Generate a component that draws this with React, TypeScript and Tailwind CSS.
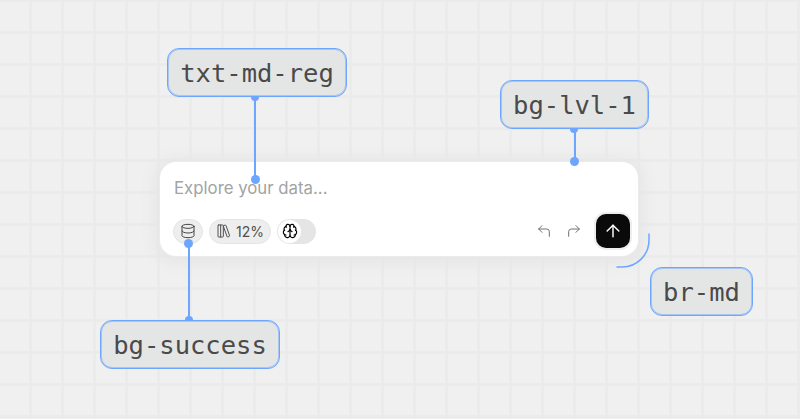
import React from 'react';
import { ArrowUp, Brain, CornerUpLeft, CornerUpRight, Database, LibraryBig } from 'lucide-react';

// Annotation label, sits on the free canvas around the card
const Tag = ({ text, className = '' }: { text: string; className?: string }) => (
  <div
    className={`absolute h-[49px] pt-[1px] flex items-center justify-center rounded-[12px] border border-[#6ea6ff] shadow-[inset_0_0_0_1px_#6ea6ff80] bg-[#e4e6e6] font-['DejaVu_Sans_Mono',monospace] text-[25.5px] text-[#4a4a4a] ${className}`}
  >
    {text}
  </div>
);

const Dot = ({ className = '' }: { className?: string }) => (
  <div className={`absolute w-[9px] h-[9px] rounded-full bg-[#6ea6ff] ${className}`} />
);

const Line = ({ className = '' }: { className?: string }) => (
  <div className={`absolute w-[2px] bg-[#6ea6ff] ${className}`} />
);

export default function App() {
  return (
    <div className="relative w-[800px] h-[419px] overflow-hidden flex items-center justify-center bg-[#f0f0f0] bg-[linear-gradient(to_right,#ebebeb_3px,transparent_3px),linear-gradient(to_bottom,#ebebeb_3px,transparent_3px)] bg-[length:32px_32px] bg-[position:29px_31px] font-['Inter',sans-serif]">
      {/* Prompt card */}
      <div className="w-[478px] h-[94px] mr-[2px] -mt-[1px] flex flex-col justify-between rounded-[16px] bg-white pl-[13px] pr-[8px] pt-[16px] pb-[8px] shadow-[0_0_0_1px_#ebebeb,0_2px_14px_6px_#e6e6e6]">
        <div className="pl-[1px] text-[16.8px] leading-[20px] text-[#a3a3a3]">Explore your data...</div>
        <div className="flex items-center justify-between">
          <div className="flex items-center gap-[6px]">
            <div className="w-[30px] h-[25px] flex items-center justify-center rounded-full bg-[#eeeeee] border border-[#e4e4e4] text-[#444444]">
              <Database size={16} strokeWidth={1.5} />
            </div>
            <div className="h-[25px] w-[62px] flex items-center justify-center gap-[4px] rounded-full bg-[#eeeeee] border border-[#e4e4e4] text-[14px] text-[#505050]">
              <LibraryBig size={16} strokeWidth={1.5} />
              12%
            </div>
            <div className="h-[25px] w-[39px] flex items-center rounded-full bg-[#e5e5e5] pl-[1px]">
              <div className="w-[23px] h-[23px] flex items-center justify-center rounded-full bg-white text-black">
                <Brain size={16} strokeWidth={1.75} />
              </div>
            </div>
          </div>
          <div className="flex items-center gap-[14px] text-[#707070]">
            <CornerUpLeft size={16} strokeWidth={1.5} />
            <CornerUpRight size={16} strokeWidth={1.5} />
            <div className="w-[34px] h-[34px] flex items-center justify-center rounded-[10px] bg-[#0a0a0a] text-white shadow-[0_0_0_2px_#eeeeee]">
              <ArrowUp size={20} strokeWidth={1.75} />
            </div>
          </div>
        </div>
      </div>

      {/* Annotations */}
      <Line className="left-[254px] top-[96px] h-[83px]" />
      <Dot className="left-[251px] top-[93px] !w-[8px] !h-[8px]" />
      <Dot className="left-[251px] top-[175px]" />
      <Tag text="txt-md-reg" className="left-[167px] top-[48px] w-[180px]" />

      <Line className="left-[574px] top-[128px] h-[34px]" />
      <Dot className="left-[570px] top-[125px] !w-[8px] !h-[8px]" />
      <Dot className="left-[570px] top-[157px]" />
      <Tag text="bg-lvl-1" className="left-[500px] top-[80px] w-[149px]" />

      <Line className="left-[188px] top-[243px] h-[78px]" />
      <Dot className="left-[184px] top-[239px]" />
      <Dot className="left-[185px] top-[316px] !w-[8px] !h-[8px]" />
      <Tag text="bg-success" className="left-[100px] top-[320px] w-[180px]" />

      <svg className="absolute left-[614px] top-[232px]" width="38" height="38" viewBox="0 0 38 38" fill="none">
        <path d="M35 1.5V8C35 23 23 35 8 35H2.5" stroke="#6ea6ff" strokeWidth="1.5" />
      </svg>
      <Tag text="br-md" className="left-[650px] top-[267px] w-[103px]" />
    </div>
  );
}
